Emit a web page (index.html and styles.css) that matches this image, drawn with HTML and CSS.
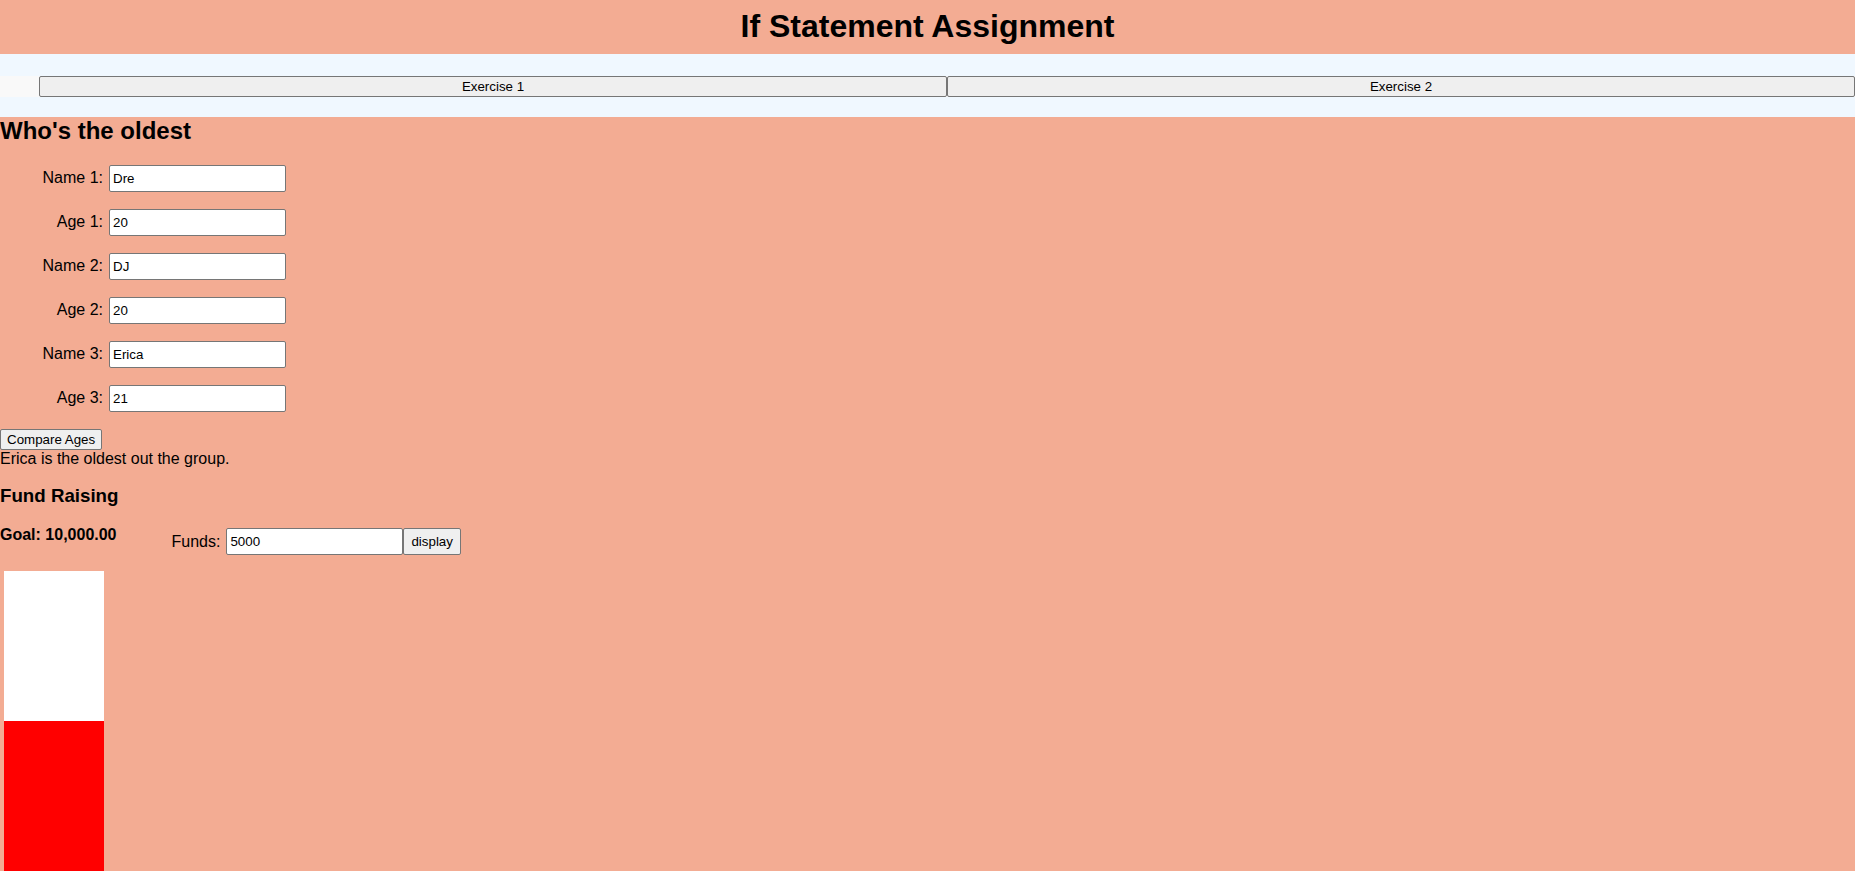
FILE: index.html
```html
<!DOCTYPE html>
<html lang="en">
<head>
<meta charset="utf-8">
<title>If Statement Assignment</title>
<link rel="stylesheet" href="styles.css">
</head>
<body>
<header class="page-header">
  <h1 class="page-title">If Statement Assignment</h1>
</header>
<nav class="tabs">
  <ul class="tab-list">
    <li class="tab-item"><button class="tab-btn">Exercise 1</button></li>
    <li class="tab-item"><button class="tab-btn">Exercise 2</button></li>
  </ul>
</nav>
<main class="content">
  <h2 class="section-title">Who's the oldest</h2>
  <div class="form-grid">
    <label class="field-label">Name 1:</label><input class="field-input" type="text" value="Dre">
    <label class="field-label">Age 1:</label><input class="field-input" type="text" value="20">
    <label class="field-label">Name 2:</label><input class="field-input" type="text" value="DJ">
    <label class="field-label">Age 2:</label><input class="field-input" type="text" value="20">
    <label class="field-label">Name 3:</label><input class="field-input" type="text" value="Erica">
    <label class="field-label">Age 3:</label><input class="field-input" type="text" value="21">
  </div>
  <button class="btn">Compare Ages</button>
  <div class="result">Erica is the oldest out the group.</div>

  <h3 class="sub-title">Fund Raising</h3>
  <div class="fund-row">
    <h4 class="goal">Goal: 10,000.00</h4>
    <label class="fund-label">Funds:</label><input class="field-input" type="text" value="5000"><button class="btn btn-tall">display</button>
  </div>
  <div class="thermo">
    <div class="thermo-empty"></div>
    <div class="thermo-fill"></div>
  </div>
</main>
</body>
</html>
```

FILE: styles.css
```css
html, body {
  margin: 0;
  padding: 0;
}
body {
  margin-right: 3px;
  font-family: "Liberation Sans", Arial, sans-serif;
  font-size: 16px;
  color: #000;
  background: #fff;
}
.page-header {
  background: #f3ac93;
  height: 54px;
  padding-top: 8px;
  box-sizing: border-box;
}
.page-title {
  margin: 0;
  text-align: center;
  font-size: 32px;
  font-weight: bold;
  line-height: 37px;
}
.tabs {
  background: #f0f8ff;
  padding: 22px 0 20px;
}
.tab-list {
  list-style: none;
  margin: 0;
  padding: 0 0 0 39px;
  display: flex;
  background: #f9f9f9;
}
.tab-item {
  flex: 1;
  display: flex;
}
.tab-btn {
  flex: 1;
  height: 21px;
  font-family: "Liberation Sans", Arial, sans-serif;
  font-size: 13.33px;
  color: #000;
  background: #efefef;
  border: 1px solid #767676;
  border-radius: 2px;
  padding: 0 6px;
  margin: 0;
}
.content {
  background: #f3ac93;
  min-height: 754px;
}
.section-title {
  margin: 0;
  font-size: 24px;
  line-height: 27.6px;
}
.form-grid {
  display: grid;
  grid-template-columns: 103px 177px;
  column-gap: 6px;
  row-gap: 17px;
  align-items: center;
  padding: 20px 0 17px;
}
.field-label {
  text-align: right;
}
.field-input {
  box-sizing: border-box;
  width: 177px;
  height: 27px;
  margin: 0;
  padding: 0 3px;
  font-family: "Liberation Sans", Arial, sans-serif;
  font-size: 13.33px;
  color: #000;
  background: #fff;
  border: 1px solid #767676;
  border-radius: 2px;
}
.btn {
  display: block;
  height: 21px;
  margin: 0;
  padding: 0 6px;
  font-family: "Liberation Sans", Arial, sans-serif;
  font-size: 13.33px;
  color: #000;
  background: #efefef;
  border: 1px solid #767676;
  border-radius: 2px;
}
.btn-tall {
  height: 27px;
  padding: 0 7px;
}
.result {
  line-height: 18.4px;
}
.sub-title {
  margin: 17px 0 0;
  font-size: 18.72px;
  line-height: 21.5px;
}
.fund-row {
  display: flex;
  align-items: flex-start;
  margin-top: 19px;
}
.goal {
  margin: 0 55px 0 0;
  font-size: 16px;
  line-height: 18.4px;
  white-space: nowrap;
}
.fund-label {
  margin-top: 2px;
  height: 27px;
  line-height: 27px;
  margin-right: 6px;
}
.fund-row .field-input,
.fund-row .btn {
  margin-top: 2px;
}
.thermo {
  width: 100px;
  margin: 16px 0 0 4px;
  display: flex;
  flex-direction: column;
}
.thermo-empty {
  height: 150px;
  background: #fff;
}
.thermo-fill {
  height: 150px;
  background: #ff0000;
}
```
